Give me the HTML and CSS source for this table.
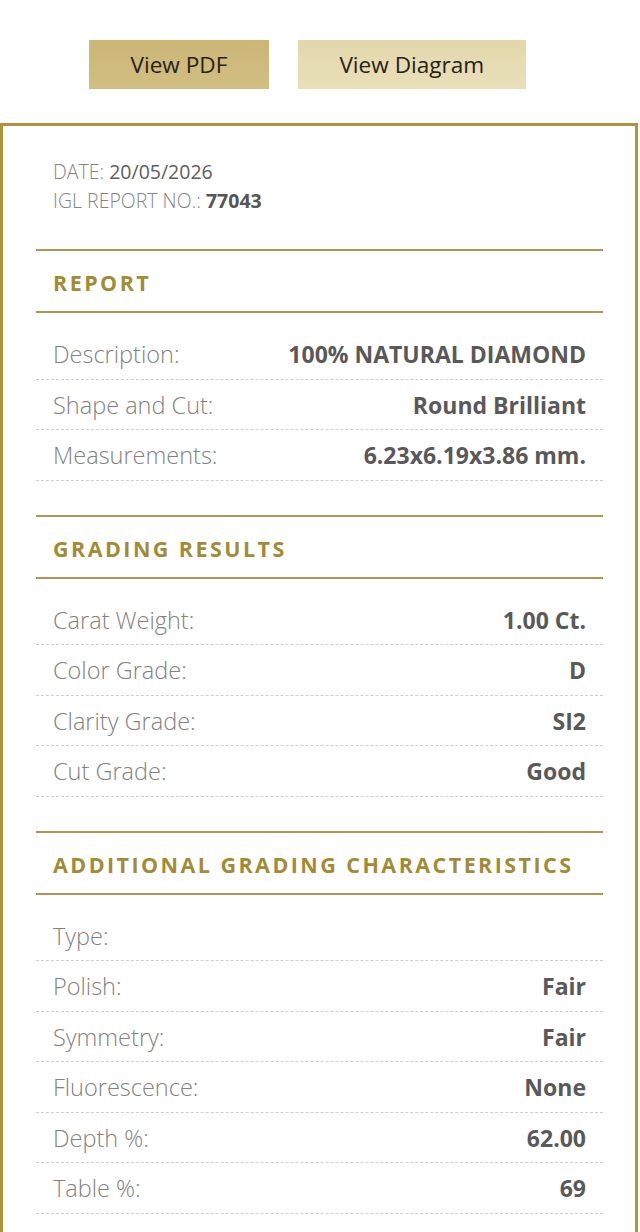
FILE: index.html
```html
<!DOCTYPE html>
<html lang="en">
<head>
<meta charset="utf-8">
<title>IGL Report</title>
<link rel="stylesheet" href="styles.css">
</head>
<body>
  <div class="actions">
    <a class="btn btn-pdf" href="#">View PDF</a>
    <a class="btn btn-diagram" href="#">View Diagram</a>
  </div>

  <div class="card">
    <div class="meta">
      <div class="meta-line"><span class="meta-label">DATE:</span> <span class="meta-date">20/05/2026</span></div>
      <div class="meta-line"><span class="meta-label">IGL REPORT NO.:</span> <strong class="meta-no">77043</strong></div>
    </div>

    <section class="section">
      <h2 class="sec-title">REPORT</h2>
      <div class="rows">
        <div class="row"><span class="label">Description:</span><span class="value">100% NATURAL DIAMOND</span></div>
        <div class="row"><span class="label">Shape and Cut:</span><span class="value">Round Brilliant</span></div>
        <div class="row"><span class="label">Measurements:</span><span class="value">6.23x6.19x3.86 mm.</span></div>
      </div>
    </section>

    <section class="section">
      <h2 class="sec-title">GRADING RESULTS</h2>
      <div class="rows">
        <div class="row"><span class="label">Carat Weight:</span><span class="value">1.00 Ct.</span></div>
        <div class="row"><span class="label">Color Grade:</span><span class="value">D</span></div>
        <div class="row"><span class="label">Clarity Grade:</span><span class="value">SI2</span></div>
        <div class="row"><span class="label">Cut Grade:</span><span class="value">Good</span></div>
      </div>
    </section>

    <section class="section">
      <h2 class="sec-title">ADDITIONAL GRADING CHARACTERISTICS</h2>
      <div class="rows">
        <div class="row"><span class="label">Type:</span><span class="value"></span></div>
        <div class="row"><span class="label">Polish:</span><span class="value">Fair</span></div>
        <div class="row"><span class="label">Symmetry:</span><span class="value">Fair</span></div>
        <div class="row"><span class="label">Fluorescence:</span><span class="value">None</span></div>
        <div class="row"><span class="label">Depth %:</span><span class="value">62.00</span></div>
        <div class="row"><span class="label">Table %:</span><span class="value">69</span></div>
      </div>
    </section>
  </div>
</body>
</html>
```

FILE: styles.css
```css
* { box-sizing: border-box; }

html, body {
  margin: 0;
  padding: 0;
  background: #ffffff;
}

body {
  font-family: "Open Sans", "Noto Sans", sans-serif;
  color: #555;
}

.actions {
  display: flex;
  gap: 29px;
  padding: 40px 0 0 89px;
}

.btn {
  display: block;
  height: 49px;
  line-height: 49px;
  padding: 0 41.5px;
  font-size: 22.6px;
  font-weight: 400;
  color: #26231a;
  text-decoration: none;
  white-space: nowrap;
}

.btn-pdf {
  background: linear-gradient(180deg, #cbb676 0%, #d2be82 100%);
}

.btn-diagram {
  background: linear-gradient(180deg, #e3d7ab 0%, #e9dfb9 100%);
}

.card {
  margin-top: 34px;
  width: 638px;
  border: 3px solid #ad943d;
  padding: 31px 32px 40px 33px;
}

.meta {
  padding: 0 17px;
  font-size: 19.5px;
  line-height: 29px;
}

.meta-label { color: #858585; font-weight: 300; }
.meta-date { color: #5e5e5e; }
.meta-no { color: #555; font-weight: 700; }

.section {
  margin-top: 34px;
}

.sec-title {
  margin: 0;
  border-top: 2px solid #a99752;
  border-bottom: 2px solid #a99752;
  padding: 3px 17px 0;
  line-height: 57px;
  font-size: 21.5px;
  font-weight: 700;
  letter-spacing: 2.45px;
  color: #a38b35;
}

.rows {
  padding-top: 16px;
}

.row {
  display: flex;
  justify-content: space-between;
  align-items: center;
  padding: 11px 17px 10.5px;
  line-height: 28px;
  border-bottom: 1px dashed #cfcfcf;
  font-size: 23px;
}

.label {
  font-weight: 300;
  font-size: 23.5px;
  color: #828282;
}

.value {
  font-weight: 700;
  color: #595959;
}
```
